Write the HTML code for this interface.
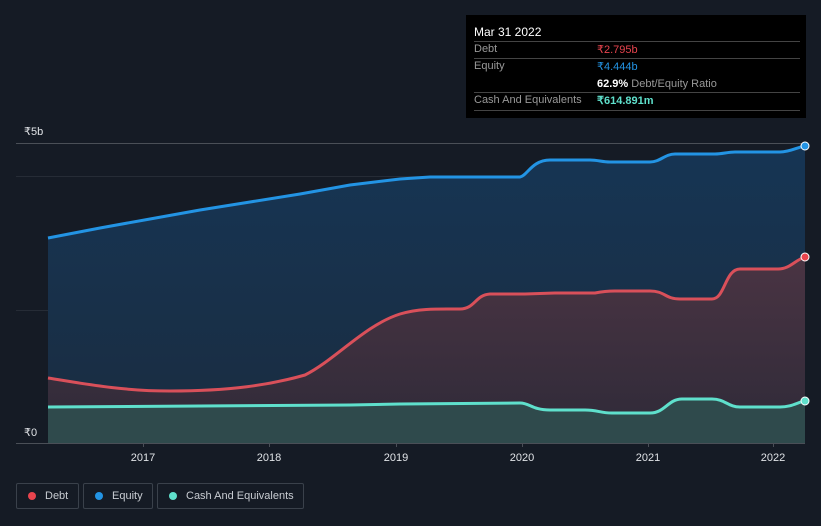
<!DOCTYPE html>
<html><head><meta charset="utf-8"><style>
body{margin:0;width:821px;height:526px;background:#151b25;font-family:"Liberation Sans",sans-serif;overflow:hidden;position:relative}
.tt{position:absolute;left:466px;top:15px;width:340px;height:103px;background:#000;color:#fff;font-size:11px}
.tt .r{position:absolute;left:8px;width:326px;border-top:1px solid #444}
.tt span{position:absolute}
.lg{position:absolute;top:483px;height:26px;border:1px solid #3a414b;border-radius:2px;color:#c8ccd2;font-size:11px;box-sizing:border-box}
.lg i{position:absolute;left:11px;top:8px;width:8px;height:8px;border-radius:50%}
.lg span{position:absolute;left:28px;top:6px}
</style></head><body>
<svg width="821" height="526" style="position:absolute;left:0;top:0">
<defs>
<linearGradient id="ge" x1="0" y1="0" x2="0" y2="1"><stop offset="0" stop-color="#163554"/><stop offset="1" stop-color="#1a2c40"/></linearGradient>
<linearGradient id="gd" x1="0" y1="0" x2="0" y2="1"><stop offset="0" stop-color="#4a3443"/><stop offset="1" stop-color="#2e2a38"/></linearGradient>
</defs>
<line x1="16" y1="143.5" x2="805" y2="143.5" stroke="#4a4f57"/>
<line x1="16" y1="176.5" x2="805" y2="176.5" stroke="#262c36"/>
<line x1="16" y1="310.5" x2="805" y2="310.5" stroke="#262c36"/>
<path d="M48,238 L100,228 150,219 200,210 250,202 300,194 350,185 400,179 430,177 520,177 C527,176 532,160 550,160 L590,160 C598,160 602,162 610,162 L650,162 C660,162 665,154 675,154 L715,154 C722,154 728,152 735,152 L780,152 C790,152 798,147 805,146 L805,443 48,443Z" fill="url(#ge)"/>
<path d="M48,378 C80,383 120,391 170,391 C230,391 270,385 305,375 C335,360 365,325 400,314 C420,308 440,309 460,309 C475,309 475,295 490,294 L525,294 555,293 595,293 C605,291 610,291 615,291 L650,291 C665,291 665,299 680,299 L712,299 C725,299 725,269 740,269 L778,269 C790,269 795,260 805,257 L805,443 48,443Z" fill="url(#gd)"/>
<path d="M48,407 L200,406 350,405 400,404 520,403 C530,403 532,410 550,410 L585,410 C598,410 600,413 612,413 L650,413 C665,413 668,399 682,399 L712,399 C725,399 728,407 740,407 L780,407 C792,407 798,402 805,401 L805,443 48,443Z" fill="#2f4a4c"/>
<path d="M48,238 L100,228 150,219 200,210 250,202 300,194 350,185 400,179 430,177 520,177 C527,176 532,160 550,160 L590,160 C598,160 602,162 610,162 L650,162 C660,162 665,154 675,154 L715,154 C722,154 728,152 735,152 L780,152 C790,152 798,147 805,146" fill="none" stroke="#2394e4" stroke-width="3"/>
<path d="M48,378 C80,383 120,391 170,391 C230,391 270,385 305,375 C335,360 365,325 400,314 C420,308 440,309 460,309 C475,309 475,295 490,294 L525,294 555,293 595,293 C605,291 610,291 615,291 L650,291 C665,291 665,299 680,299 L712,299 C725,299 725,269 740,269 L778,269 C790,269 795,260 805,257" fill="none" stroke="#d9505a" stroke-width="3"/>
<path d="M48,407 L200,406 350,405 400,404 520,403 C530,403 532,410 550,410 L585,410 C598,410 600,413 612,413 L650,413 C665,413 668,399 682,399 L712,399 C725,399 728,407 740,407 L780,407 C792,407 798,402 805,401" fill="none" stroke="#5fe0cc" stroke-width="3"/>
<circle cx="805" cy="146" r="4" fill="#2394e4" stroke="#fff" stroke-width="1"/>
<circle cx="805" cy="257" r="4" fill="#e8444e" stroke="#fff" stroke-width="1"/>
<circle cx="805" cy="401" r="4" fill="#5fe0cc" stroke="#fff" stroke-width="1"/>
<rect x="16" y="423" width="32" height="20" fill="#151b25"/>
<line x1="16" y1="443.5" x2="805" y2="443.5" stroke="#4a4f57"/>
<g stroke="#4a4f57"><line x1="143.5" y1="443" x2="143.5" y2="447"/><line x1="269.5" y1="443" x2="269.5" y2="447"/><line x1="396.5" y1="443" x2="396.5" y2="447"/><line x1="522.5" y1="443" x2="522.5" y2="447"/><line x1="648.5" y1="443" x2="648.5" y2="447"/><line x1="773.5" y1="443" x2="773.5" y2="447"/></g>
<g fill="#e0e3e7" font-size="11" text-anchor="middle" font-family="Liberation Sans,sans-serif">
<text x="143" y="461">2017</text><text x="269" y="461">2018</text><text x="396" y="461">2019</text><text x="522" y="461">2020</text><text x="648" y="461">2021</text><text x="773" y="461">2022</text>
</g>
<text x="24" y="135" fill="#e0e3e7" font-size="11" font-family="Liberation Sans,sans-serif">₹5b</text>
<text x="24" y="436" fill="#e0e3e7" font-size="11" font-family="Liberation Sans,sans-serif">₹0</text>
</svg>
<div class="tt">
<span style="left:8px;top:10px;font-size:12px">Mar 31 2022</span>
<div class="r" style="top:26px"></div>
<span style="left:8px;top:28px;color:#999">Debt</span><span style="left:131px;top:28px;color:#e8444e">₹2.795b</span>
<div class="r" style="top:43px"></div>
<span style="left:8px;top:45px;color:#999">Equity</span><span style="left:131px;top:45px;color:#2394e4">₹4.444b</span>
<span style="left:131px;top:63px"><b>62.9%</b> <span style="position:static;color:#999">Debt/Equity Ratio</span></span>
<div class="r" style="top:77px"></div>
<span style="left:8px;top:79px;color:#999">Cash And Equivalents</span><span style="left:131px;top:79px;color:#5fe0cc;font-weight:bold">₹614.891m</span>
<div class="r" style="top:95px"></div>
</div>
<div class="lg" style="left:16px;width:63px"><i style="background:#e8444e"></i><span>Debt</span></div>
<div class="lg" style="left:83px;width:70px"><i style="background:#2394e4"></i><span>Equity</span></div>
<div class="lg" style="left:157px;width:147px"><i style="background:#5fe0cc"></i><span>Cash And Equivalents</span></div>
</body></html>
